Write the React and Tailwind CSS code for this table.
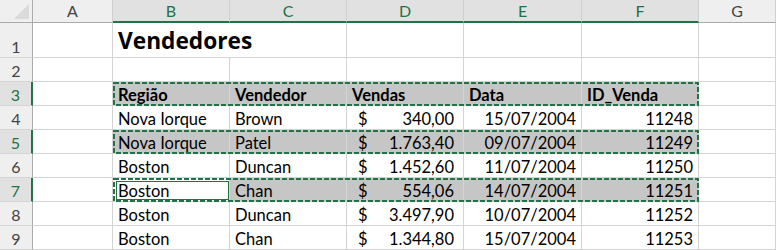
import React from "react";

const COLS = ["A", "B", "C", "D", "E", "F", "G"];
const SEL_COLS = ["B", "C", "D", "E", "F"];
const SEL_ROWS = [3, 5, 7];

const rows = [
  { r: 4, regiao: "Nova Iorque", vendedor: "Brown", vendas: "340,00", data: "15/07/2004", id: "11248" },
  { r: 5, regiao: "Nova Iorque", vendedor: "Patel", vendas: "1.763,40", data: "09/07/2004", id: "11249" },
  { r: 6, regiao: "Boston", vendedor: "Duncan", vendas: "1.452,60", data: "11/07/2004", id: "11250" },
  { r: 7, regiao: "Boston", vendedor: "Chan", vendas: "554,06", data: "14/07/2004", id: "11251" },
  { r: 8, regiao: "Boston", vendedor: "Duncan", vendas: "3.497,90", data: "10/07/2004", id: "11252" },
  { r: 9, regiao: "Boston", vendedor: "Chan", vendas: "1.344,80", data: "15/07/2004", id: "11253" },
];

const RowHead = ({ n }) => {
  const sel = SEL_ROWS.includes(n);
  return (
    <div
      className={`flex items-end justify-center leading-[20px] text-[16px] border-b border-[#d4d4d4] ${
        sel
          ? "bg-[#e1e1e1] text-[#217346] border-r-2 border-r-[#217346]"
          : "bg-[#efefef] text-[#444444] border-r border-r-[#ababab]"
      }`}
    >
      {n}
    </div>
  );
};

const Cell = ({ children, fill, className = "" }) => (
  <div
    className={`flex items-end leading-[20px] whitespace-nowrap border-r border-b border-[#d4d4d4] px-[5px] ${
      fill ? "bg-[#c6c6c6]" : ""
    } ${className}`}
  >
    {children}
  </div>
);

const Money = ({ value, fill }) => (
  <Cell fill={fill} className="justify-between">
    <span className="pl-[6px]">$</span>
    <span className="pr-[4px]">{value}</span>
  </Cell>
);

export default function App() {
  return (
    <div className="relative w-[776px] h-[250px] overflow-hidden bg-white font-['Lato',sans-serif] text-[16.5px] text-black">
      <div className="grid grid-cols-[33px_80px_117px_117px_117px_118px_117px_1fr] grid-rows-[23px_35px_repeat(8,24px)]">
        {/* column headers */}
        <div className="relative bg-[#efefef] border-r border-r-[#ababab] border-b border-b-[#ababab]">
          <svg className="absolute right-[3px] bottom-[3px]" width="15" height="15" viewBox="0 0 15 15">
            <polygon points="15,0 15,15 0,15" fill="#dadada" />
          </svg>
        </div>
        {COLS.map((c) => {
          const sel = SEL_COLS.includes(c);
          return (
            <div
              key={c}
              className={`flex items-center justify-center text-[16px] border-r border-r-[#d0d0d0] ${
                sel
                  ? "bg-[#e1e1e1] text-[#217346] border-b-2 border-b-[#217346]"
                  : "bg-[#efefef] text-[#444444] border-b border-b-[#ababab]"
              }`}
            >
              {c}
            </div>
          );
        })}

        {/* row 1 */}
        <RowHead n={1} />
        <Cell />
        <Cell className="col-span-2 pb-[3px] font-['Open_Sans',sans-serif] font-bold text-[22.7px] leading-[26px]">
          Vendedores
        </Cell>
        <Cell />
        <Cell />
        <Cell />
        <Cell />

        {/* row 2 */}
        <RowHead n={2} />
        {COLS.map((c) => (
          <Cell key={c} />
        ))}

        {/* row 3 */}
        <RowHead n={3} />
        <Cell />
        <Cell fill className="font-bold">Região</Cell>
        <Cell fill className="font-bold">Vendedor</Cell>
        <Cell fill className="font-bold">Vendas</Cell>
        <Cell fill className="font-bold">Data</Cell>
        <Cell fill className="font-bold">ID_Venda</Cell>
        <Cell />

        {rows.map((row) => {
          const sel = SEL_ROWS.includes(row.r);
          const active = row.r === 7;
          return (
            <React.Fragment key={row.r}>
              <RowHead n={row.r} />
              <Cell />
              <Cell fill={sel && !active}>{row.regiao}</Cell>
              <Cell fill={sel}>{row.vendedor}</Cell>
              <Money value={row.vendas} fill={sel} />
              <Cell fill={sel} className="justify-end">{row.data}</Cell>
              <Cell fill={sel} className="justify-end">{row.id}</Cell>
              <Cell />
            </React.Fragment>
          );
        })}
      </div>

      {/* selection overlay */}
      <svg className="absolute inset-0 pointer-events-none" width="776" height="250">
        <g fill="none" stroke="#217346" strokeWidth="2" strokeDasharray="5 2">
          <rect x="114" y="83" width="584" height="22" />
          <rect x="114" y="131" width="584" height="22" />
          <rect x="114" y="179" width="584" height="22" />
        </g>
        <rect x="116.5" y="181.5" width="112" height="18" fill="none" stroke="#217346" strokeWidth="1" />
      </svg>
    </div>
  );
}
